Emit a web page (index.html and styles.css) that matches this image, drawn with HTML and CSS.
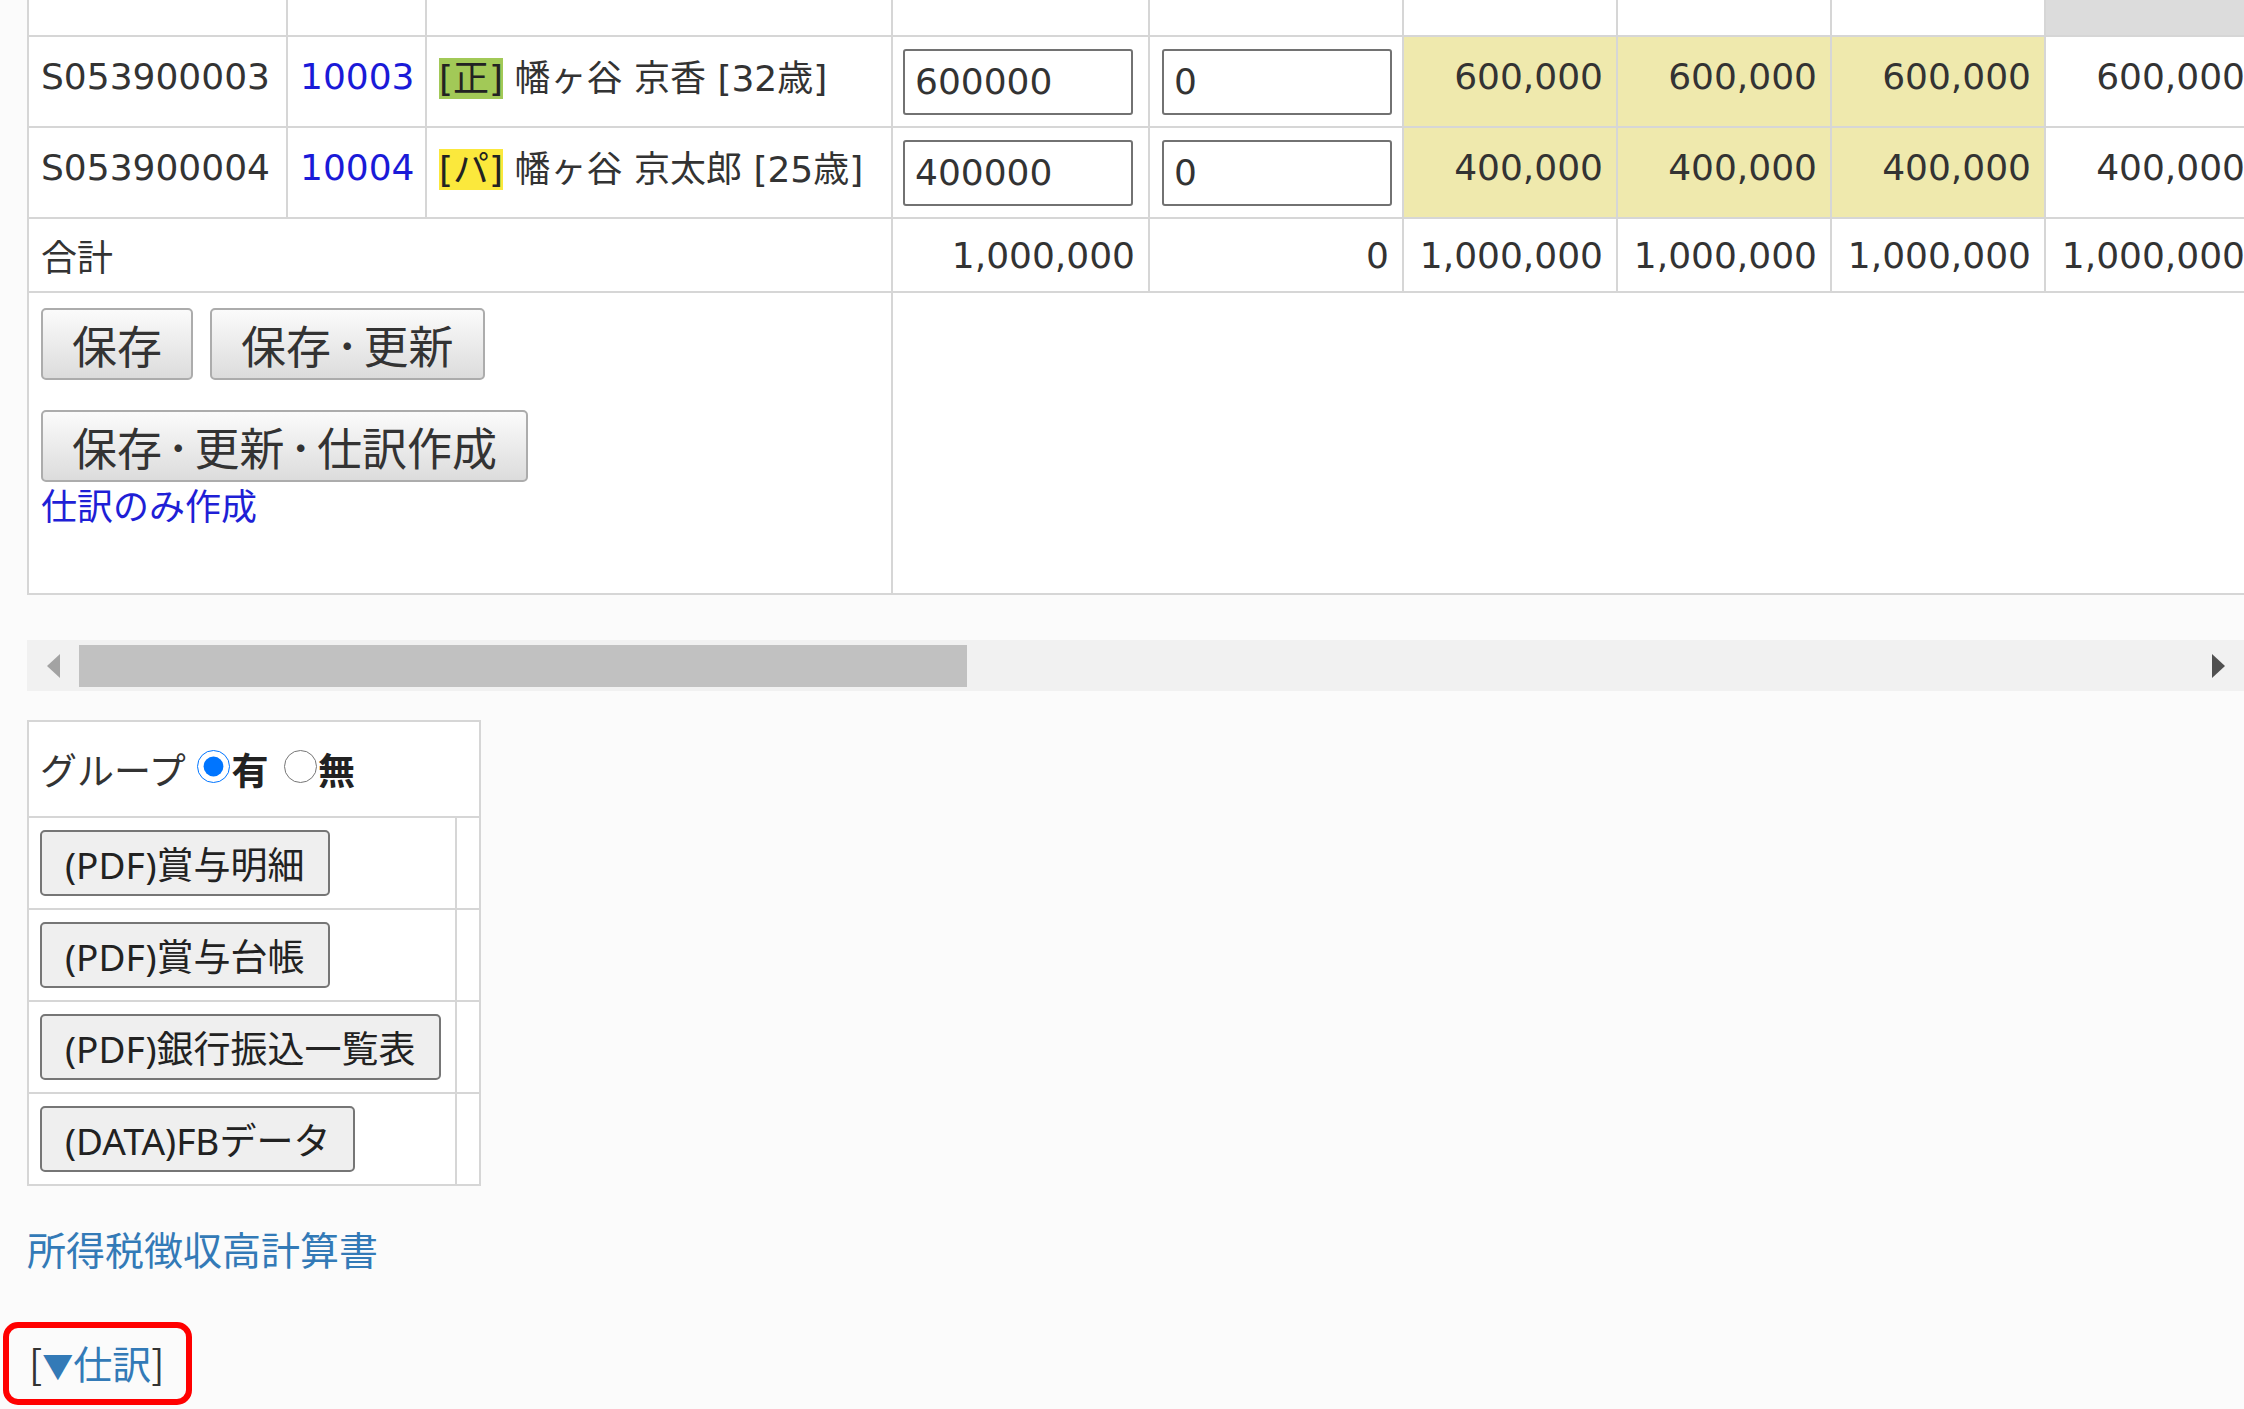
FILE: index.html
```html
<!DOCTYPE html>
<html lang="ja">
<head>
	<meta charset="UTF-8">
	<title>賞与計算</title>
	<link rel="stylesheet" href="styles.css">
</head>
<body>

	<div id="sheet">
		<table id="bonus">
			<colgroup>
				<col style="width:259px">
				<col style="width:139px">
				<col style="width:466px">
				<col style="width:257px">
				<col style="width:254px">
				<col style="width:214px">
				<col style="width:214px">
				<col style="width:214px">
				<col style="width:214px">
			</colgroup>
			<tr class="head">
				<td></td><td></td><td></td><td></td><td></td><td></td><td></td><td></td><td class="gray"></td>
			</tr>
			<tr class="row">
				<td>S053900003</td>
				<td><a href="#" class="no">10003</a></td>
				<td class="name"><span class="badge sei">[正]</span> 幡ヶ谷 京香 [32歳]</td>
				<td class="in"><input type="text" value="600000"></td>
				<td class="in2"><input type="text" value="0"></td>
				<td class="amt hl">600,000</td>
				<td class="amt hl">600,000</td>
				<td class="amt hl">600,000</td>
				<td class="amt">600,000</td>
			</tr>
			<tr class="row">
				<td>S053900004</td>
				<td><a href="#" class="no">10004</a></td>
				<td class="name"><span class="badge part">[パ]</span> 幡ヶ谷 京太郎 [25歳]</td>
				<td class="in"><input type="text" value="400000"></td>
				<td class="in2"><input type="text" value="0"></td>
				<td class="amt hl">400,000</td>
				<td class="amt hl">400,000</td>
				<td class="amt hl">400,000</td>
				<td class="amt">400,000</td>
			</tr>
			<tr class="total">
				<td colspan="3">合計</td>
				<td class="amt">1,000,000</td>
				<td class="amt">0</td>
				<td class="amt">1,000,000</td>
				<td class="amt">1,000,000</td>
				<td class="amt">1,000,000</td>
				<td class="amt">1,000,000</td>
			</tr>
			<tr class="actions">
				<td colspan="3">
					<div class="btn-line">
						<button class="btn">保存</button>
						<button class="btn">保存<span class="dot">･</span>更新</button>
					</div>
					<div class="btn-line second">
						<button class="btn">保存<span class="dot">･</span>更新<span class="dot">･</span>仕訳作成</button>
					</div>
					<a href="#" class="only">仕訳のみ作成</a>
				</td>
				<td colspan="6"></td>
			</tr>
		</table>
	</div>

	<div id="hscroll">
		<span class="arrow left"></span>
		<span class="thumb"></span>
		<span class="track"></span>
		<span class="arrow right"></span>
	</div>

	<table id="output">
		<colgroup>
			<col style="width:428px">
			<col style="width:24px">
		</colgroup>
		<tr class="group">
			<td colspan="2">グループ <label><input type="radio" name="grp" checked><b>有</b></label> <label><input type="radio" name="grp"><b>無</b></label></td>
		</tr>
		<tr><td><button class="pdf">(PDF)賞与明細</button></td><td></td></tr>
		<tr><td><button class="pdf">(PDF)賞与台帳</button></td><td></td></tr>
		<tr><td><button class="pdf">(PDF)銀行振込一覧表</button></td><td></td></tr>
		<tr><td><button class="pdf">(DATA)FBデータ</button></td><td></td></tr>
	</table>

	<p class="calc"><a href="#">所得税徴収高計算書</a></p>

	<p class="journal"><span class="mark">[<a href="#"><span class="tri">▼</span>仕訳</a>]</span></p>

</body>
</html>
```

FILE: styles.css
```css
*{
	margin: 0;
	padding: 0;
	box-sizing: border-box;
}
body{
	background: #fbfbfb;
	padding-left: 27px;
	font-family: "DejaVu Sans", "Noto Sans CJK JP", sans-serif;
	color: #333;
	overflow: hidden;
}
a{
	text-decoration: none;
}

/* 明細テーブル */
#sheet{
	overflow: hidden;
}
#bonus{
	width: 2231px;
	table-layout: fixed;
	border-collapse: collapse;
	background: #fff;
	font-size: 36px;
}
#bonus td{
	border: 2px solid #d6d6d6;
	padding: 0 12px;
	white-space: nowrap;
	overflow: hidden;
	vertical-align: middle;
}
#bonus .head td{
	height: 36px;
	border-top: none;
}
#bonus .head .gray{
	background: #dcdcdc;
}
#bonus .row td{
	height: 91px;
	padding-bottom: 10px;
}
#bonus .row td.name{
	padding-bottom: 14px;
}
#bonus .row td.in,
#bonus .row td.in2{
	padding-bottom: 0;
}
#bonus .total td{
	height: 74px;
}
#bonus .amt{
	text-align: right;
	padding-right: 13px;
}
#bonus .hl{
	background: #efe9ad;
}
#bonus .no{
	color: #1a1ad8;
}
.badge{
	color: #222;
}
.badge.sei{
	background: #a2c957;
}
.badge.part{
	background: #fbe83c;
}
#bonus .in{
	padding-left: 10px;
}
#bonus input{
	width: 230px;
	height: 66px;
	border: 2px solid #727272;
	border-radius: 3px;
	padding: 0 10px;
	font: inherit;
	color: #333;
	background: #fff;
}

/* 保存ボタン */
#bonus .actions td{
	height: 302px;
	vertical-align: top;
	padding: 15px 12px;
}
.btn-line{
	display: flex;
	gap: 17px;
}
.btn-line.second{
	margin-top: 30px;
}
.btn{
	height: 72px;
	padding: 0 29px;
	border: 2px solid #acacac;
	border-radius: 5px;
	background: linear-gradient(#fbfbfb, #dcdcdc);
	font-family: "Noto Sans CJK JP", sans-serif;
	font-size: 45px;
	color: #333;
}
.btn .dot{
	margin: 0 5px;
}
.only{
	display: block;
	font-family: "Noto Sans CJK JP", sans-serif;
	font-size: 36px;
	line-height: 44px;
	color: #1f1fd6;
}

/* 横スクロールバー */
#hscroll{
	display: flex;
	align-items: center;
	height: 51px;
	margin-top: 45px;
	background: #f1f1f1;
}
#hscroll .arrow{
	width: 52px;
	height: 100%;
	display: flex;
	align-items: center;
	justify-content: center;
}
#hscroll .arrow::before{
	content: "";
	border-top: 12px solid transparent;
	border-bottom: 12px solid transparent;
}
#hscroll .left::before{
	border-right: 13px solid #a3a3a3;
}
#hscroll .right::before{
	border-left: 13px solid #505050;
}
#hscroll .thumb{
	width: 888px;
	height: 42px;
	background: #c1c1c1;
}
#hscroll .track{
	flex: 1;
}

/* 出力テーブル */
#output{
	margin-top: 29px;
	width: 452px;
	table-layout: fixed;
	border-collapse: collapse;
	background: #fff;
	font-family: "Noto Sans", "Noto Sans CJK JP", sans-serif;
	font-size: 37px;
	color: #333;
}
#output td{
	border: 2px solid #d6d6d6;
	height: 92px;
	padding: 0 11px;
	white-space: nowrap;
}
#output .group td{
	height: 96px;
}
#output label + label{
	margin-left: 4px;
}
#output input{
	width: 33px;
	height: 33px;
	margin: 0 1px 0 2px;
	vertical-align: 2px;
	accent-color: #0075ff;
}
#output b{
	color: #222;
}
.pdf{
	height: 66px;
	padding: 0 23px;
	border: 2px solid #767676;
	border-radius: 5px;
	background: #efefef;
	font: inherit;
	color: #222;
}

/* リンク */
.calc{
	margin-top: 33px;
	font-family: "Noto Sans CJK JP", sans-serif;
	font-size: 39px;
	line-height: 58px;
}
.calc a{
	color: #337ab7;
}
.journal{
	margin-top: 45px;
	font-family: "Noto Sans CJK JP", sans-serif;
	font-size: 39px;
	line-height: 58px;
}
.mark{
	display: inline-block;
	margin-left: -24px;
	padding: 5px 22px 5px 20px;
	border: 6px solid #ff0000;
	border-radius: 15px;
	color: #333;
}
.mark a{
	color: #337ab7;
}
.mark .tri{
	font-size: 31px;
	vertical-align: 1px;
}
```
